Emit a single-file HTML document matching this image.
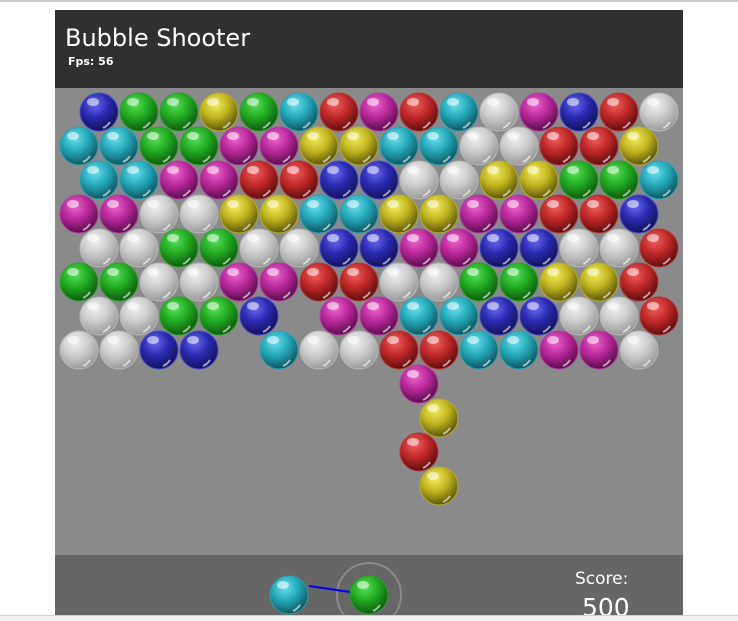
<!DOCTYPE html>
<html><head><meta charset="utf-8"><style>
html,body{margin:0;padding:0;width:738px;height:620px;overflow:hidden;background:#fff;font-family:"DejaVu Sans","Liberation Sans",sans-serif}
#top{position:absolute;left:0;top:0;width:738px;height:2px;background:#c8c8c8}
#hdr{position:absolute;left:55px;top:10px;width:628px;height:78px;background:#303030;color:#fff}
#hdr h1{position:absolute;left:10px;top:13px;margin:0;font-size:24px;font-weight:normal;line-height:30px}
#hdr .fps{position:absolute;left:13px;top:45px;font-size:11px;font-weight:bold}
#play{position:absolute;left:55px;top:88px;width:628px;height:467px;background:#8a8a8a}
#bot{position:absolute;left:55px;top:555px;width:628px;height:60px;background:#666;color:#fff;overflow:hidden}
#bot .s1{position:absolute;left:520px;top:14px;font-size:17px}
#bot .s2{position:absolute;left:527px;top:38px;font-size:25px}
#foot{position:absolute;left:0;top:615px;width:738px;height:5px;background:#f0f0f0;border-top:1px solid #d0d0d0}
svg{position:absolute;left:0;top:0}
</style></head><body>
<div id="top"></div>
<div id="hdr"><h1>Bubble Shooter</h1><div class="fps">Fps: 56</div></div>
<div id="play"></div>
<div id="bot"><div class="s1">Score:</div><div class="s2">500</div></div>
<svg width="738" height="615" viewBox="0 0 738 615">
<defs>
<radialGradient id="gB" cx="40%" cy="30%" r="70%"><stop offset="0" stop-color="#6a6af0"/><stop offset=".5" stop-color="#2a2ab0"/><stop offset="1" stop-color="#12125a"/></radialGradient>
<radialGradient id="gG" cx="40%" cy="30%" r="70%"><stop offset="0" stop-color="#5ae05a"/><stop offset=".5" stop-color="#22aa22"/><stop offset="1" stop-color="#0e5a0e"/></radialGradient>
<radialGradient id="gY" cx="40%" cy="30%" r="70%"><stop offset="0" stop-color="#f4ee60"/><stop offset=".5" stop-color="#c0b420"/><stop offset="1" stop-color="#5e560a"/></radialGradient>
<radialGradient id="gC" cx="40%" cy="30%" r="70%"><stop offset="0" stop-color="#6ae0ee"/><stop offset=".5" stop-color="#25a8b8"/><stop offset="1" stop-color="#0e5560"/></radialGradient>
<radialGradient id="gR" cx="40%" cy="30%" r="70%"><stop offset="0" stop-color="#f06060"/><stop offset=".5" stop-color="#c02828"/><stop offset="1" stop-color="#5e0e0e"/></radialGradient>
<radialGradient id="gM" cx="40%" cy="30%" r="70%"><stop offset="0" stop-color="#ee66cc"/><stop offset=".5" stop-color="#b8289a"/><stop offset="1" stop-color="#5a0e4a"/></radialGradient>
<radialGradient id="gW" cx="40%" cy="30%" r="70%"><stop offset="0" stop-color="#f2f2f2"/><stop offset=".5" stop-color="#cccccc"/><stop offset="1" stop-color="#9a9a9a"/></radialGradient>
<g id="hl"><ellipse cx="-6" cy="-10" rx="6" ry="4" fill="#fff" opacity=".55"/><path d="M11 10 A15 15 0 0 1 4 16" stroke="#fff" stroke-width="2" fill="none" opacity=".6"/></g>
<g id="B"><circle r="19" fill="url(#gB)" stroke="#4848c8" stroke-width="1"/><use href="#hl"/></g>
<g id="G"><circle r="19" fill="url(#gG)" stroke="#30a030" stroke-width="1"/><use href="#hl"/></g>
<g id="Y"><circle r="19" fill="url(#gY)" stroke="#b8ae30" stroke-width="1"/><use href="#hl"/></g>
<g id="C"><circle r="19" fill="url(#gC)" stroke="#30a0b0" stroke-width="1"/><use href="#hl"/></g>
<g id="R"><circle r="19" fill="url(#gR)" stroke="#b03838" stroke-width="1"/><use href="#hl"/></g>
<g id="M"><circle r="19" fill="url(#gM)" stroke="#b038a0" stroke-width="1"/><use href="#hl"/></g>
<g id="W"><circle r="19" fill="url(#gW)" stroke="#b8b8b8" stroke-width="1"/><use href="#hl"/></g>
</defs>
<!-- row0 y112 -->
<use href="#B" x="99" y="112"/><use href="#G" x="139" y="112"/><use href="#G" x="179" y="112"/><use href="#Y" x="219" y="112"/><use href="#G" x="259" y="112"/><use href="#C" x="299" y="112"/><use href="#R" x="339" y="112"/><use href="#M" x="379" y="112"/><use href="#R" x="419" y="112"/><use href="#C" x="459" y="112"/><use href="#W" x="499" y="112"/><use href="#M" x="539" y="112"/><use href="#B" x="579" y="112"/><use href="#R" x="619" y="112"/><use href="#W" x="659" y="112"/>
<!-- row1 y146 -->
<use href="#C" x="79" y="146"/><use href="#C" x="119" y="146"/><use href="#G" x="159" y="146"/><use href="#G" x="199" y="146"/><use href="#M" x="239" y="146"/><use href="#M" x="279" y="146"/><use href="#Y" x="319" y="146"/><use href="#Y" x="359" y="146"/><use href="#C" x="399" y="146"/><use href="#C" x="439" y="146"/><use href="#W" x="479" y="146"/><use href="#W" x="519" y="146"/><use href="#R" x="559" y="146"/><use href="#R" x="599" y="146"/><use href="#Y" x="639" y="146"/>
<!-- row2 y180 -->
<use href="#C" x="99" y="180"/><use href="#C" x="139" y="180"/><use href="#M" x="179" y="180"/><use href="#M" x="219" y="180"/><use href="#R" x="259" y="180"/><use href="#R" x="299" y="180"/><use href="#B" x="339" y="180"/><use href="#B" x="379" y="180"/><use href="#W" x="419" y="180"/><use href="#W" x="459" y="180"/><use href="#Y" x="499" y="180"/><use href="#Y" x="539" y="180"/><use href="#G" x="579" y="180"/><use href="#G" x="619" y="180"/><use href="#C" x="659" y="180"/>
<!-- row3 y214 -->
<use href="#M" x="79" y="214"/><use href="#M" x="119" y="214"/><use href="#W" x="159" y="214"/><use href="#W" x="199" y="214"/><use href="#Y" x="239" y="214"/><use href="#Y" x="279" y="214"/><use href="#C" x="319" y="214"/><use href="#C" x="359" y="214"/><use href="#Y" x="399" y="214"/><use href="#Y" x="439" y="214"/><use href="#M" x="479" y="214"/><use href="#M" x="519" y="214"/><use href="#R" x="559" y="214"/><use href="#R" x="599" y="214"/><use href="#B" x="639" y="214"/>
<!-- row4 y248 -->
<use href="#W" x="99" y="248"/><use href="#W" x="139" y="248"/><use href="#G" x="179" y="248"/><use href="#G" x="219" y="248"/><use href="#W" x="259" y="248"/><use href="#W" x="299" y="248"/><use href="#B" x="339" y="248"/><use href="#B" x="379" y="248"/><use href="#M" x="419" y="248"/><use href="#M" x="459" y="248"/><use href="#B" x="499" y="248"/><use href="#B" x="539" y="248"/><use href="#W" x="579" y="248"/><use href="#W" x="619" y="248"/><use href="#R" x="659" y="248"/>
<!-- row5 y282 -->
<use href="#G" x="79" y="282"/><use href="#G" x="119" y="282"/><use href="#W" x="159" y="282"/><use href="#W" x="199" y="282"/><use href="#M" x="239" y="282"/><use href="#M" x="279" y="282"/><use href="#R" x="319" y="282"/><use href="#R" x="359" y="282"/><use href="#W" x="399" y="282"/><use href="#W" x="439" y="282"/><use href="#G" x="479" y="282"/><use href="#G" x="519" y="282"/><use href="#Y" x="559" y="282"/><use href="#Y" x="599" y="282"/><use href="#R" x="639" y="282"/>
<!-- row6 y316 -->
<use href="#W" x="99" y="316"/><use href="#W" x="139" y="316"/><use href="#G" x="179" y="316"/><use href="#G" x="219" y="316"/><use href="#B" x="259" y="316"/><use href="#M" x="339" y="316"/><use href="#M" x="379" y="316"/><use href="#C" x="419" y="316"/><use href="#C" x="459" y="316"/><use href="#B" x="499" y="316"/><use href="#B" x="539" y="316"/><use href="#W" x="579" y="316"/><use href="#W" x="619" y="316"/><use href="#R" x="659" y="316"/>
<!-- row7 y350 -->
<use href="#W" x="79" y="350"/><use href="#W" x="119" y="350"/><use href="#B" x="159" y="350"/><use href="#B" x="199" y="350"/><use href="#C" x="279" y="350"/><use href="#W" x="319" y="350"/><use href="#W" x="359" y="350"/><use href="#R" x="399" y="350"/><use href="#R" x="439" y="350"/><use href="#C" x="479" y="350"/><use href="#C" x="519" y="350"/><use href="#M" x="559" y="350"/><use href="#M" x="599" y="350"/><use href="#W" x="639" y="350"/>
<!-- chain -->
<use href="#M" x="419" y="384"/><use href="#Y" x="439" y="418"/><use href="#R" x="419" y="452"/><use href="#Y" x="439" y="486"/>
<!-- shooter -->
<circle cx="369" cy="595" r="32" fill="none" stroke="#8a8a8a" stroke-width="2"/>
<line x1="309" y1="586" x2="350" y2="592" stroke="#0000ee" stroke-width="2"/>
<use href="#C" x="289" y="595"/>
<use href="#G" x="369" y="595"/>
</svg>
<div id="foot"></div>
</body></html>
